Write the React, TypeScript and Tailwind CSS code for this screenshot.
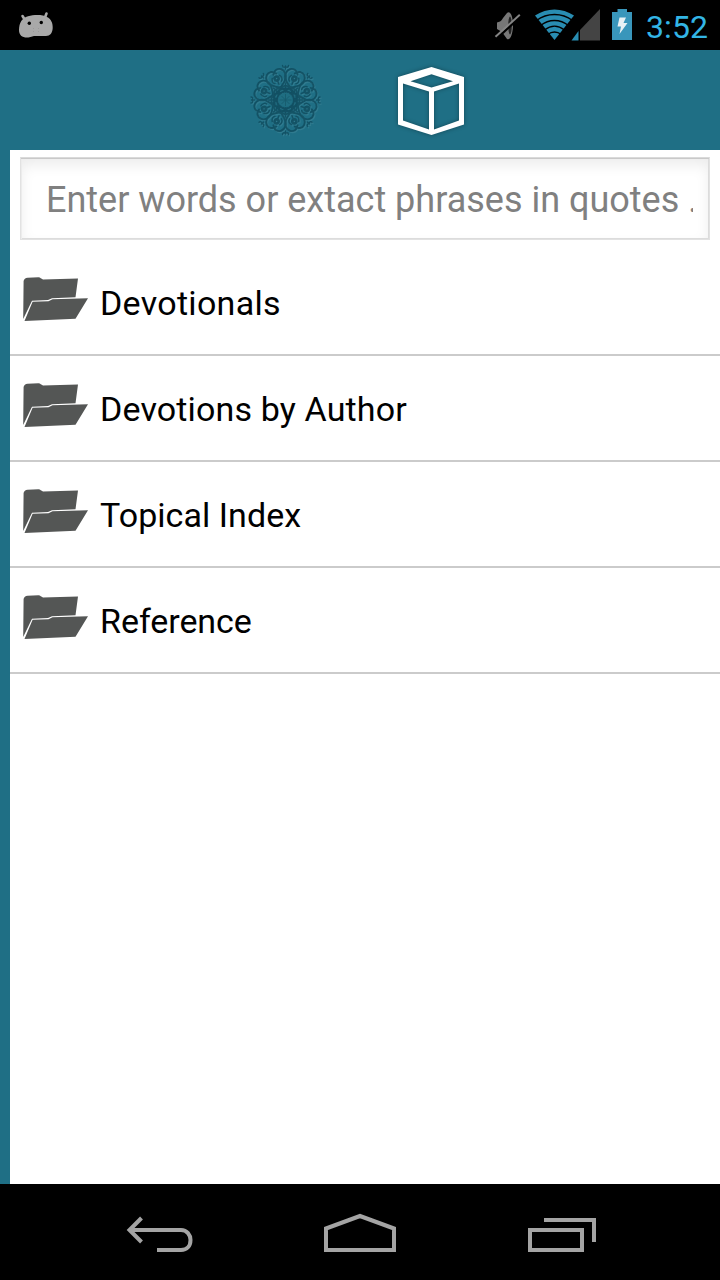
import React from "react";

const petalAngles = [22.5, 67.5, 112.5, 157.5, 202.5, 247.5, 292.5, 337.5];
const budAngles = [0, 45, 90, 135, 180, 225, 270, 315];
const folders = [
  { name: "Devotionals", tracking: "tracking-[0.3px]" },
  { name: "Devotions by Author", tracking: "tracking-[0.14px]" },
  { name: "Topical Index", tracking: "tracking-[0.05px]" },
  { name: "Reference", tracking: "tracking-[-0.05px]" },
];

function OrnamentLines() {
  return (
    <g fill="none" strokeLinecap="round" strokeLinejoin="round">
      {petalAngles.map((a) => (
        <g key={a} transform={`rotate(${a})`}>
          <path d="M0 -13C-3 -16 -10 -18 -10 -24.5C-10 -29.5 -6.5 -32 -3 -31.5C-0.5 -31 0.5 -29 -1.5 -28" strokeWidth="1.9" />
          <path d="M0 -13C3 -16 10 -18 10 -24.5C10 -29.5 6.5 -32 3 -31.5C0.5 -31 -0.5 -29 1.5 -28" strokeWidth="1.9" />
          <path d="M0 -17V-21M-3.5 -19C-5.5 -20 -5.5 -23 -4 -25M3.5 -19C5.5 -20 5.5 -23 4 -25" strokeWidth="1.5" />
          <circle cy="-23.2" r="2" strokeWidth="2.6" />
          <path d="M-3 -10L0 -14L3 -10M-4.5 -13.5H4.5" strokeWidth="1.8" />
        </g>
      ))}
      {budAngles.map((a) => (
        <g key={a} transform={`rotate(${a})`}>
          <path d="M0 -31V-33M-3 -34.5C-3 -32 0 -32.5 0 -34C0 -32.5 3 -32 3 -34.5" strokeWidth="1.3" />
          <path d="M0 -8V-17M-2 -8L0 -11L2 -8" strokeWidth="1.5" />
        </g>
      ))}
      <circle r="8.5" strokeWidth="1.6" strokeDasharray="2 1" />
      <circle r="11.5" strokeWidth="1.7" strokeDasharray="3 1.5" />
    </g>
  );
}

function Ornament() {
  return (
    <svg className="h-[80px] w-[80px]" viewBox="-40.5 -40 80 80">
      <g transform="translate(1 1.2)" stroke="#4a8d9e" opacity="0.4">
        <OrnamentLines />
      </g>
      <g className="blur-[0.4px]">
        <circle r="13" fill="#155c70" opacity="0.5" />
        <g stroke="#0f4a5c" opacity="0.78">
          <OrnamentLines />
        </g>
        <circle r="7" fill="#1f6e82" />
        <path d="M-6 0H6M0 -6V6M-4 -4L4 4M4 -4L-4 4" stroke="#165a6c" strokeWidth="0.8" />
      </g>
    </svg>
  );
}

function CubeIcon() {
  return (
    <svg className="h-[80px] w-[80px] drop-shadow-[0_0_2px_rgba(0,0,0,0.35)]" viewBox="391 60 80 80" fill="#fff" fillRule="evenodd">
      <path d="M431.5 67L464 77V124.5L431.5 135L398 124.5V77ZM410.5 81.3L431.5 87.5L453 81.3L431.5 74.3ZM403 83.5V120.5L429 129.5V91.5ZM434 91.5V129.5L459 120.5V83.5Z" />
    </svg>
  );
}

function FolderIcon() {
  return (
    <svg className="h-[48px] w-[70px] shrink-0" viewBox="20 275 70 48" fill="#545655">
      <path d="M23.2 319L23.6 281C24 279 25.5 278 27.5 277.7L38.5 277.3C40.5 277.3 41 279 43 279.4L78 278.5L75.5 297.2L52 298.2L48 300L32 300.8Z" />
      <path d="M32.6 301.7L48.5 301.2L52.5 299.2L88 298.2L75.5 318.8L24.5 321Z" />
    </svg>
  );
}

function StatusBar() {
  return (
    <header className="flex h-[50px] shrink-0 items-start bg-black">
      <svg className="h-[50px] w-[80px]" viewBox="0 0 80 50">
        <path d="M22.5 16L25 20M46.5 13.5L44.8 18" stroke="#a9a9a9" strokeWidth="2.6" strokeLinecap="round" />
        <path d="M19 30C19 23 22 18 28 16.3C34 14.5 43 14.5 47 17C51 19 53 23 52.7 28C52.5 33 50 36 46 36H35C32 36 31 37.5 27 37.5C22 37.5 19 35 19 30Z" fill="#a9a9a9" />
        <circle cx="29.3" cy="23.3" r="1.7" fill="#000" />
        <circle cx="41.3" cy="22.5" r="1.7" fill="#000" />
        <path d="M33 28.5H34M38 28.5H39M33 31.5H34M38 31.5H39" stroke="#999" />
      </svg>
      <svg className="ml-auto h-[50px] w-[160px]" viewBox="480 0 160 50">
        <path d="M497 22.5C499 21.5 501 22 503 18L507 13C510 10 513 16 513 25C513 34 510 41 507 39L502 32L497 29Z" fill="#777" />
        <ellipse cx="510" cy="25.5" rx="1.8" ry="9" fill="#222" />
        <path d="M496.5 38.5L521 16" stroke="#000" strokeWidth="2.5" />
        <path d="M495.5 36.8L519.8 14.8" stroke="#858585" strokeWidth="2" />
        <path d="M535 15.5C547 7.5 562 7.5 574 15.5L554.5 40Z" fill="#298db2" />
        <g fill="none" stroke="#000" strokeWidth="1.4">
          <path d="M536.5 20.5C547 12.5 562 12.5 572.5 20.5" />
          <path d="M540.5 25.5C549 18.8 560 18.8 568.5 25.5" />
          <path d="M544.5 30C551 25 558 25 564.5 30" />
          <path d="M547.5 34.5C552 31.3 557 31.3 561.5 34.5" />
        </g>
        <path d="M600 9V40.5H580V30Z" fill="#444" />
        <path d="M578.5 31V40.5H571.5Z" fill="#298db2" />
        <path d="M612 12H617.5V9H627V12H632V40H612Z" fill="#3996bb" />
        <path d="M619.5 17.5H626L623.5 23H627.5L619.5 34L621 26.5H617.5Z" fill="#e7f1f5" />
      </svg>
      <span className="w-[80px] whitespace-nowrap pl-[6px] pt-[3px] text-[32px] leading-[48px] tracking-[0.1px] text-[#33b5e5]">3:52</span>
    </header>
  );
}

function NavigationBar() {
  return (
    <nav className="flex h-[96px] shrink-0 items-center justify-between bg-black px-[110px]">
      <button className="h-[96px] w-[100px]" aria-label="Back">
        <svg viewBox="110 1184 100 96" fill="none" stroke="#a4a4a4" strokeWidth="4">
          <path d="M141.5 1218L129.5 1230L141.5 1242" />
          <path d="M130 1230H181C187 1230 190.5 1235 190.5 1240C190.5 1246 187 1250 181 1250H157" />
        </svg>
      </button>
      <button className="h-[96px] w-[100px]" aria-label="Home">
        <svg viewBox="310 1184 100 96" fill="none" stroke="#a4a4a4" strokeWidth="4">
          <path d="M326 1250V1228.5L360 1216L394 1228.5V1250Z" />
        </svg>
      </button>
      <button className="h-[96px] w-[100px]" aria-label="Recent apps">
        <svg viewBox="510 1184 100 96" fill="none" stroke="#a4a4a4" strokeWidth="4">
          <path d="M530 1230H582V1250H530ZM544 1220H594V1242" />
        </svg>
      </button>
    </nav>
  );
}

export default function App() {
  return (
    <div className="flex h-[1280px] w-[720px] flex-col overflow-hidden bg-[#1f6f85] font-[Roboto,sans-serif]">
      <StatusBar />
      <div className="flex h-[100px] shrink-0 gap-[66px] pl-[245px] pt-[10px]">
        <Ornament />
        <CubeIcon />
      </div>
      <main className="ml-[10px] flex flex-1 flex-col bg-white">
        <div className="mx-[10px] mt-[7px] h-[83px] shrink-0 border border-[#e2e2e2] border-t-[#dadada] px-[16px] shadow-[inset_0_1px_0_#c9c9c9,inset_1px_0_0_#ececec,inset_-1px_0_0_#dcdcdc,inset_0_-1px_0_#dcdcdc,inset_0_7px_14px_rgba(0,0,0,0.08)]">
          <div className="overflow-hidden whitespace-nowrap pl-[9px] text-[36px] leading-[84px] text-[#808080]">Enter words or extact phrases in quotes ...</div>
        </div>
        <ul className="mt-[10px]">
          {folders.map(({ name, tracking }) => (
            <li key={name} className="flex h-[106px] items-start border-b-2 border-[#cbcbcb] pl-[10px] pt-[25px]">
              <FolderIcon />
              <span className={`whitespace-nowrap pl-[10px] text-[34px] leading-[56px] text-black ${tracking}`}>{name}</span>
            </li>
          ))}
        </ul>
      </main>
      <NavigationBar />
    </div>
  );
}
